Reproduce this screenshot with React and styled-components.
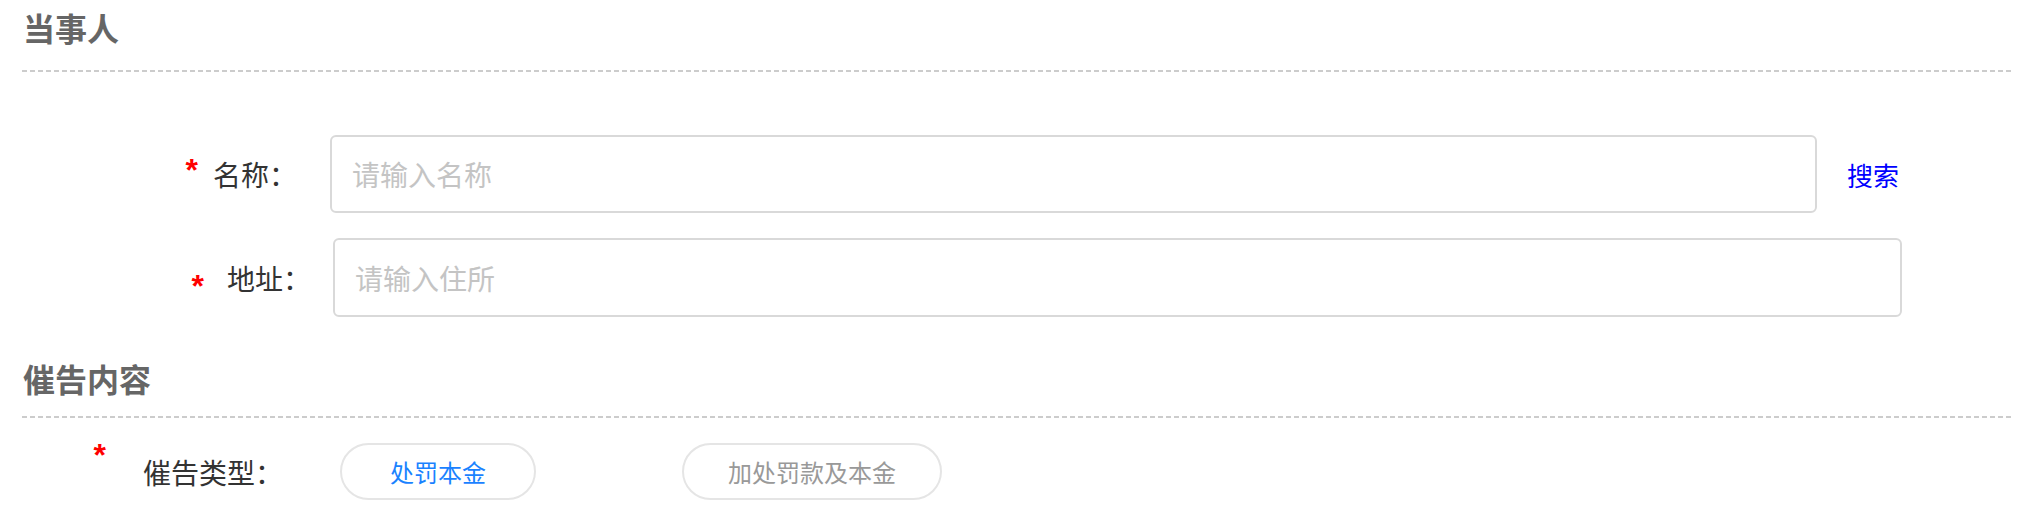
import React, { useState } from 'react';
import styled, { createGlobalStyle } from 'styled-components';

const GlobalStyle = createGlobalStyle`
  html, body {
    margin: 0;
    padding: 0;
    background: #fff;
  }
  body {
    font-family: "Noto Sans CJK SC", "Noto Sans", sans-serif;
  }
`;

const Page = styled.div`
  width: 2034px;
  height: 512px;
  padding: 0 22px;
  box-sizing: border-box;
  overflow: hidden;
`;

const SectionTitle = styled.h2`
  margin: ${({ top }) => top}px 0 0 0;
  padding-left: 1px;
  font-size: 32px;
  line-height: 44px;
  font-weight: bold;
  color: #666;
`;

const Divider = styled.div`
  margin-top: ${({ top }) => top}px;
  height: 2px;
  background: linear-gradient(to right, #cccccc 0 5px, transparent 5px 8px);
  background-size: 8px 2px;
`;

const FormRow = styled.div`
  display: flex;
  align-items: center;
  margin-top: ${({ top }) => top}px;
`;

const LabelCell = styled.div`
  flex: none;
  width: ${({ width }) => width}px;
  padding-right: ${({ pad }) => pad}px;
  box-sizing: border-box;
  display: flex;
  align-items: center;
  justify-content: flex-end;
  gap: ${({ gap }) => gap}px;
`;

/* red required mark; "raise" lifts it above the label's middle */
const Star = styled.span`
  color: #ff0000;
  font-family: "Liberation Sans", sans-serif;
  font-size: 32px;
  font-weight: bold;
  line-height: 14px;
  height: 14px;
  padding-top: 8px;
  box-sizing: border-box;
  margin-top: ${({ raise }) => -raise * 2}px;
`;

const Label = styled.span`
  font-size: 28px;
  line-height: 40px;
  color: #333;
  white-space: nowrap;
`;

const TextInput = styled.input`
  flex: none;
  width: ${({ width }) => width}px;
  height: ${({ height }) => height}px;
  box-sizing: border-box;
  border: 2px solid #d9d9d9;
  border-radius: 6px;
  padding: 0 20px;
  font-family: "Noto Sans CJK SC", sans-serif;
  font-size: 28px;
  color: #333;
  outline: none;
  &::placeholder {
    color: #c4c4c4;
  }
`;

const SearchLink = styled.a`
  margin-left: 30px;
  font-size: 26px;
  color: #0000ff;
  text-decoration: none;
  cursor: pointer;
`;

const Choices = styled.div`
  display: flex;
  gap: 146px;
`;

const Choice = styled.button`
  height: 57px;
  width: ${({ width }) => width}px;
  border: 2px solid #e5e5e5;
  border-radius: 30px;
  background: #fff;
  font-family: "Noto Sans CJK SC", sans-serif;
  font-size: 24px;
  color: ${({ active }) => (active ? '#1a82ff' : '#999')};
  cursor: pointer;
`;

export default function App() {
  const [type, setType] = useState('principal');

  return (
    <Page>
      <GlobalStyle />
      <SectionTitle top={5}>当事人</SectionTitle>
      <Divider top={21} />

      <FormRow top={63}>
        <LabelCell width={308} pad={33} gap={15}>
          <Star raise={12}>*</Star>
          <Label>名称：</Label>
        </LabelCell>
        <TextInput width={1487} height={78} placeholder="请输入名称" />
        <SearchLink>搜索</SearchLink>
      </FormRow>

      <FormRow top={25}>
        <LabelCell width={311} pad={22} gap={23}>
          <Star raise={0}>*</Star>
          <Label>地址：</Label>
        </LabelCell>
        <TextInput width={1569} height={79} placeholder="请输入住所" />
      </FormRow>

      <SectionTitle top={39}>催告内容</SectionTitle>
      <Divider top={16} />

      <FormRow top={25}>
        <LabelCell width={318} pad={57} gap={37}>
          <Star raise={25}>*</Star>
          <Label>催告类型：</Label>
        </LabelCell>
        <Choices>
          <Choice width={196} active={type === 'principal'} onClick={() => setType('principal')}>
            处罚本金
          </Choice>
          <Choice width={260} active={type === 'fine'} onClick={() => setType('fine')}>
            加处罚款及本金
          </Choice>
        </Choices>
      </FormRow>
    </Page>
  );
}
